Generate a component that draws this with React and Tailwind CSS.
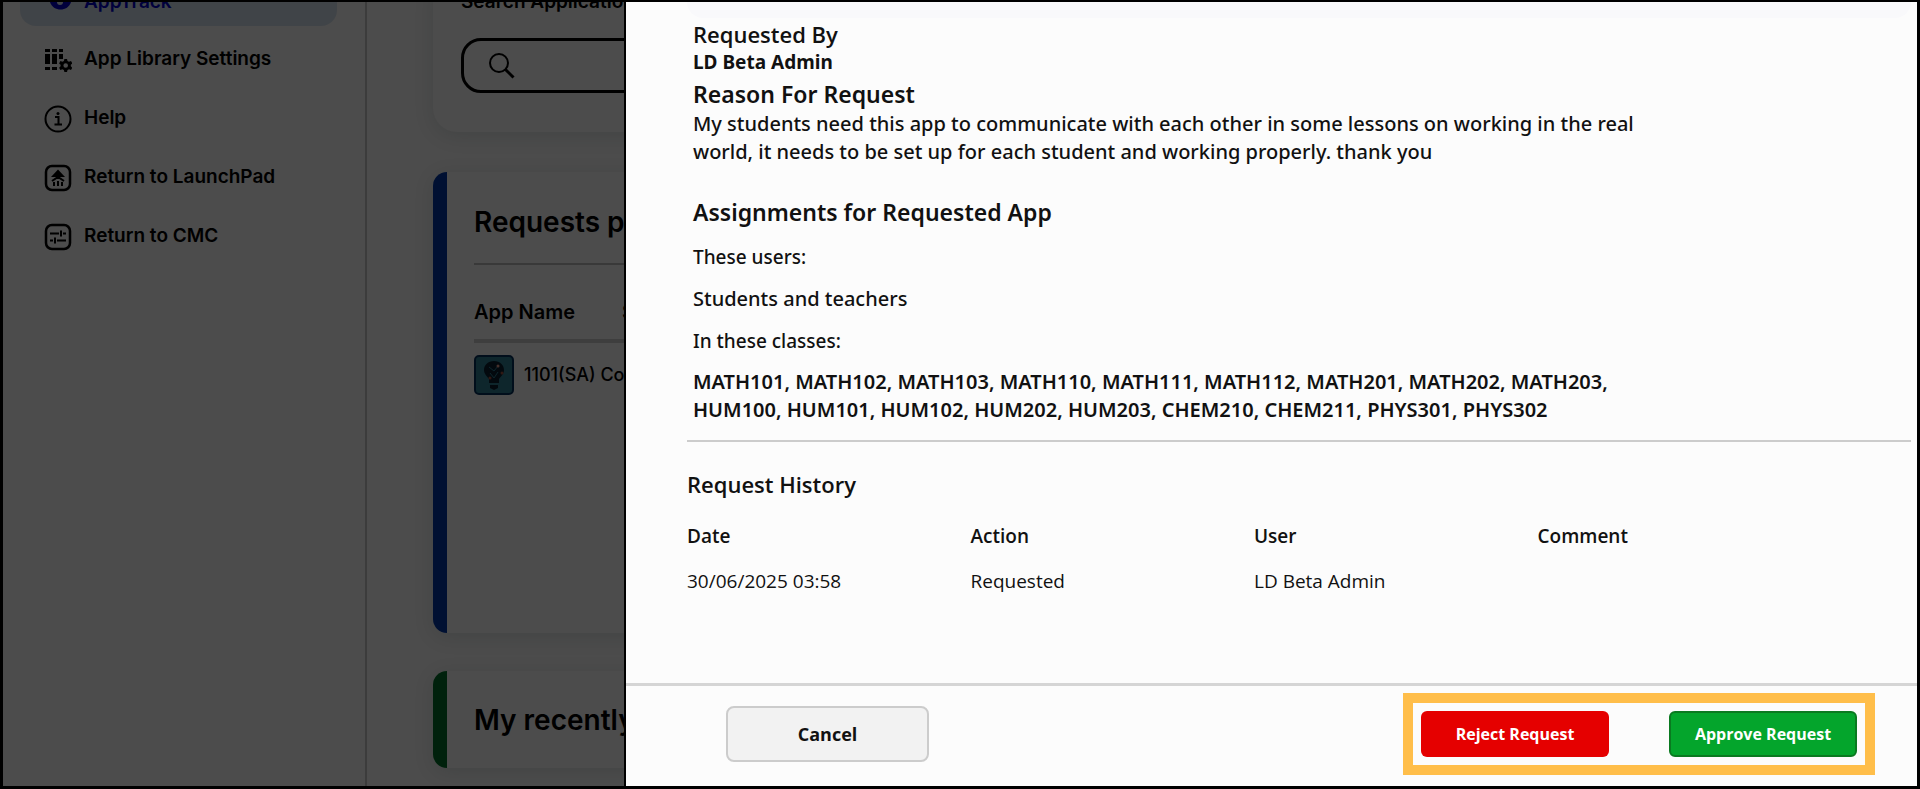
import React from "react";

const navItems = [
  { label: "App Library Settings", icon: LibraryIcon },
  { label: "Help", icon: HelpIcon },
  { label: "Return to LaunchPad", icon: LaunchPadIcon },
  { label: "Return to CMC", icon: CmcIcon },
];

function EyeIcon() {
  return (
    <svg viewBox="0 0 28 28" className="size-7" fill="currentColor" aria-hidden="true">
      <path d="M6 14c3-6 18-6 21 0-3 10-18 10-21 0z" />
      <circle cx="16" cy="14" r="3" fill="#d8e4f0" />
    </svg>
  );
}

function LibraryIcon() {
  return (
    <svg viewBox="0 0 28 28" className="size-7" fill="currentColor" aria-hidden="true">
      <path d="M1 3h5v3H1zM8 3h5v3H8zM15 3h4v3h-4zM1 8h5v10H1zM8 8h5v10H8zM15 8h4v5h-4zM1 21h5v3H1zM8 21h5v3H8z" />
      <path
        fillRule="evenodd"
        d="M20.400 13h2.600l.5 2 1.500.8 2-.7 1.300 2.300-1.500 1.400v1.500l1.500 1.400-1.300 2.300-2-.7-1.500.8-.5 2h-2.600l-.5-2-1.500-.8-2 .7-1.300-2.300 1.500-1.400v-1.500l-1.500-1.400 1.300-2.300 2 .7 1.500-.8zM21.700 17.200a2.300 2.300 0 1 0 0 4.600 2.300 2.300 0 0 0 0-4.600z"
      />
    </svg>
  );
}

function HelpIcon() {
  return (
    <svg viewBox="0 0 28 28" className="size-7" fill="none" stroke="currentColor" aria-hidden="true">
      <circle cx="14" cy="14" r="12.500" strokeWidth="2" />
      <path d="M11 12h3.500v7M10.500 19.500h7.500" strokeWidth="2" />
      <circle cx="14" cy="8.500" r="1.500" fill="currentColor" stroke="none" />
    </svg>
  );
}

function LaunchPadIcon() {
  return (
    <svg viewBox="0 0 28 28" className="size-7" fill="none" stroke="currentColor" aria-hidden="true">
      <rect x="2" y="2" width="24" height="24" rx="6" strokeWidth="2.500" />
      <path d="M14 5.500l7 7.500H7z" fill="currentColor" stroke="none" />
      <path d="M8 17l6-4 6 4M10 22v-4M14 22v-5M18 22v-4" strokeWidth="2" />
    </svg>
  );
}

function CmcIcon() {
  return (
    <svg viewBox="0 0 28 28" className="size-7" fill="none" stroke="currentColor" aria-hidden="true">
      <rect x="2" y="2" width="24" height="24" rx="6" strokeWidth="2.500" />
      <path d="M6 10.500h9M19 10.500h3M17 7.500v6M6 17.500h3M13 17.500h9M11 14.500v6" strokeWidth="2" />
    </svg>
  );
}

function SearchIcon() {
  return (
    <svg viewBox="0 0 28 28" className="size-7" fill="none" stroke="currentColor" aria-hidden="true">
      <circle cx="11" cy="11" r="9" strokeWidth="2" />
      <path d="M17 17l8.500 8.500" strokeWidth="3" />
    </svg>
  );
}

function BulbIcon() {
  return (
    <svg viewBox="0 0 40 40" className="size-10 shrink-0" aria-hidden="true">
      <rect x="1" y="1" width="38" height="38" rx="4" fill="#2f8094" stroke="#06305c" strokeWidth="2" />
      <path d="M20 6c-6 0-10 4-10 9 0 4 3 6 5 9v4h10v-4c2-3 5-5 5-9 0-5-4-9-10-9zM16 30h8v3l-4 2-4-2z" fill="#0c2030" />
      <path d="M15 12l5 4 4-5M16 18l4 5 4-6" stroke="#2b7f96" strokeWidth="1" fill="none" />
      <circle cx="24" cy="11" r="1.500" fill="#e8a090" />
      <circle cx="28" cy="18" r="1.500" fill="#a05040" />
      <circle cx="16" cy="23" r="1.500" fill="#a05040" />
    </svg>
  );
}

function Sidebar() {
  return (
    <nav className="w-[364px] shrink-0 border-r-2 border-[#c8c8c8] pr-7 pl-[17px] text-[19px] font-semibold">
      <a
        href="#apptrack"
        className="-mt-8 flex h-14 items-center gap-3 rounded-2xl bg-[#d8e4f0] pt-2 pl-6 text-[#0000c8]"
      >
        <EyeIcon />
        AppTrack
      </a>
      <ul className="pt-1">
        {navItems.map(({ label, icon: Icon }) => (
          <li key={label}>
            <a href="#nav" className="flex h-[59px] items-center gap-3 pl-6">
              <Icon />
              {label}
            </a>
          </li>
        ))}
      </ul>
    </nav>
  );
}

function Main() {
  return (
    <main className="min-w-0 flex-1 pl-[66px]">
      <section className="-mt-6 h-[154px] rounded-3xl pt-3 pl-7 shadow-[0_4px_20px_rgba(0,40,40,0.12)]">
        <label htmlFor="search" className="block text-[19px] leading-6 font-semibold">
          Search Applications
        </label>
        <div className="mt-6 flex h-[55px] items-center gap-3 rounded-[20px] border-3 border-black pl-6">
          <SearchIcon />
          <input id="search" type="text" className="min-w-0 flex-1 outline-none" />
        </div>
      </section>

      <section className="mt-10 h-[461px] rounded-[14px] border-l-14 border-[#0038a8] pl-[27px] shadow-[0_4px_20px_rgba(0,40,40,0.12)]">
        <h2 className="flex h-[93px] items-center border-b-2 border-[#c0c0c0] pt-2 text-[28px] font-semibold">
          Requests pending
        </h2>
        <table className="w-full table-fixed text-left">
          <thead className="border-b-4 border-[#d0d0d0] text-xl">
            <tr className="h-[76px]">
              <th className="w-[148px] pt-5 font-semibold">App Name</th>
              <th className="pt-5 font-semibold">Source</th>
            </tr>
          </thead>
          <tbody>
            <tr className="h-[66px]">
              <td colSpan={2}>
                <div className="flex items-center gap-2.5 text-lg font-medium">
                  <BulbIcon />
                  1101(SA) Core
                </div>
              </td>
            </tr>
          </tbody>
        </table>
      </section>

      <section className="mt-[38px] flex h-[97px] items-center rounded-[14px] border-l-14 border-[#007028] pl-[27px] shadow-[0_4px_20px_rgba(0,40,40,0.12)]">
        <h2 className="text-[28px] font-semibold">My recently requested</h2>
      </section>
    </main>
  );
}

const columns = ["Date", "Action", "User", "Comment"];
const history = [["30/06/2025 03:58", "Requested", "LD Beta Admin", ""]];

function RequestDrawer() {
  return (
    <aside
      role="dialog"
      aria-label="App request"
      className="absolute inset-y-0 right-0 left-[621px] flex flex-col border-l-2 border-black bg-[#fcfcfc] font-['Open_Sans',sans-serif] text-[#111111]"
    >
      <div className="flex-1 pr-1.5 pl-[61px] text-[19px]">
        <div className="h-4 rounded-b-2xl bg-[#f9f9fb]" />
        <div className="max-w-[960px] pb-4 pl-1.5 font-['Noto_Sans',sans-serif] font-medium">
          <h3 className="font-['Open_Sans',sans-serif] text-[22px] leading-8 font-semibold">
            Requested By
          </h3>
          <p className="leading-6 font-bold">LD Beta Admin</p>
          <h3 className="pt-1 text-[23px] leading-8 font-semibold">Reason For Request</h3>
          <p className="text-xl leading-7">
            My students need this app to communicate with each other in some lessons on working in
            the real world, it needs to be set up for each student and working properly. thank you
          </p>
          <h3 className="pt-7 pb-1.5 text-[23px] leading-9 font-semibold">
            Assignments for Requested App
          </h3>
          <p className="leading-[42px]">These users:</p>
          <p className="text-xl leading-[42px]">Students and teachers</p>
          <p className="leading-[42px]">In these classes:</p>
          <p className="pt-1.5 text-xl leading-7 font-semibold">
            MATH101, MATH102, MATH103, MATH110, MATH111, MATH112, MATH201, MATH202, MATH203,
            HUM100, HUM101, HUM102, HUM202, HUM203, CHEM210, CHEM211, PHYS301, PHYS302
          </p>
        </div>
        <h3 className="border-t-2 border-[#cccccc] pt-6 text-[22px] leading-9 font-semibold">
          Request History
        </h3>
        <table className="mt-3 w-[1134px] table-fixed text-left">
          <thead>
            <tr className="h-11">
              {columns.map((name) => (
                <th key={name} className="font-semibold">{name}</th>
              ))}
            </tr>
          </thead>
          <tbody>
            {history.map((row) => (
              <tr key={row[0]} className="h-[46px] font-medium">
                {row.map((cell, i) => (
                  <td key={columns[i]}>{cell}</td>
                ))}
              </tr>
            ))}
          </tbody>
        </table>
      </div>

      <footer className="flex h-[103px] items-center justify-between border-t-3 border-[#d5d5d5] pr-[42px] pb-1 pl-[100px] text-lg">
        <button type="button" className="h-14 w-[203px] rounded-lg border-2 border-[#cccccc] bg-[#f2f2f2] font-bold">
          Cancel
        </button>
        <div className="flex items-center gap-15 border-10 border-[#ffbe4a] p-2 text-base font-bold text-white">
          <button type="button" className="h-[46px] w-[188px] rounded-md bg-[#e50000]">
            Reject Request
          </button>
          <button type="button" className="h-[46px] w-[188px] rounded-md border-2 border-[#0a7a20] bg-[#04a52c]">
            Approve Request
          </button>
        </div>
      </footer>
    </aside>
  );
}

export default function App() {
  return (
    <div className="relative flex h-screen min-h-[780px] overflow-hidden border-3 border-t-2 border-black bg-[#fdfdfd] font-[Inter,sans-serif] text-black">
      <Sidebar />
      <Main />
      <div className="absolute inset-0 bg-black/70" />
      <RequestDrawer />
    </div>
  );
}
